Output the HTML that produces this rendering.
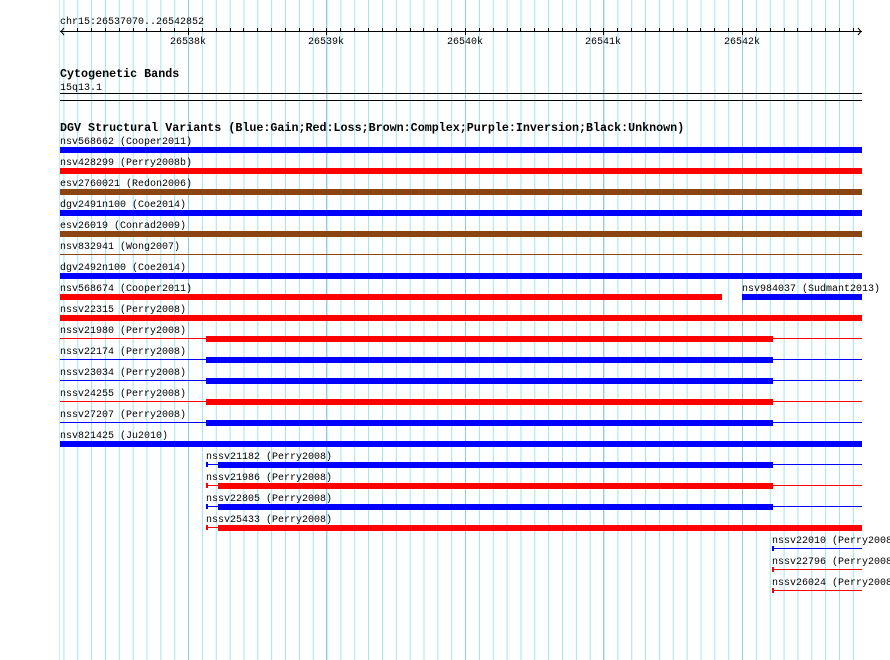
<!DOCTYPE html>
<html><head><meta charset="utf-8"><style>
html,body{margin:0;padding:0;background:#fff;width:890px;height:660px;overflow:hidden}
svg{display:block}
text{font-family:"Liberation Mono","DejaVu Sans Mono",monospace;font-size:10px;fill:#000}
.b{font-weight:bold;font-size:11.7px}
</style></head><body>
<svg width="890" height="660" xmlns="http://www.w3.org/2000/svg">
<defs><pattern id="g" x="63.4" y="0" width="13.85" height="660" patternUnits="userSpaceOnUse"><rect x="0" y="0" width="1" height="660" fill="#a0e4f0"/></pattern></defs>
<rect x="63" y="0" width="800" height="660" fill="url(#g)"/>
<rect x="59" y="0" width="1" height="660" fill="#c8eef4"/>
<g fill="#90cce8"><rect x="188" y="0" width="1" height="660"/><rect x="326" y="0" width="1" height="660"/><rect x="465" y="0" width="1" height="660"/><rect x="603" y="0" width="1" height="660"/><rect x="742" y="0" width="1" height="660"/></g>
<text x="60" y="24">chr15:26537070..26542852</text>
<rect x="60" y="31" width="802" height="1" fill="#000"/>
<path d="M64 28 L61 31.5 L64 35 M858 28 L861 31.5 L858 35" stroke="#000" fill="none"/>
<g stroke="#000"><path d="M77.5 28v4M91.5 28v4M105.5 28v4M119.5 28v4M133.5 28v4M146.5 28v4M160.5 28v4M174.5 28v4M188.5 28v7M202.5 28v4M216.5 28v4M230.5 28v4M243.5 28v4M257.5 28v4M271.5 28v4M285.5 28v4M299.5 28v4M313.5 28v4M326.5 28v7M340.5 28v4M354.5 28v4M368.5 28v4M382.5 28v4M396.5 28v4M410.5 28v4M423.5 28v4M437.5 28v4M451.5 28v4M465.5 28v7M479.5 28v4M493.5 28v4M507.5 28v4M520.5 28v4M534.5 28v4M548.5 28v4M562.5 28v4M576.5 28v4M590.5 28v4M603.5 28v7M617.5 28v4M631.5 28v4M645.5 28v4M659.5 28v4M673.5 28v4M687.5 28v4M700.5 28v4M714.5 28v4M728.5 28v4M742.5 28v7M756.5 28v4M770.5 28v4M784.5 28v4M797.5 28v4M811.5 28v4M825.5 28v4M839.5 28v4M853.5 28v4"/></g>
<text x="170" y="44">26538k</text><text x="308" y="44">26539k</text><text x="447" y="44">26540k</text><text x="585" y="44">26541k</text><text x="724" y="44">26542k</text>
<text x="60" y="77" class="b">Cytogenetic Bands</text>
<text x="60" y="90">15q13.1</text>
<rect x="60" y="93" width="802" height="1" fill="#000"/>
<rect x="60" y="100" width="802" height="1" fill="#000"/>
<text x="60" y="131" class="b">DGV Structural Variants (Blue:Gain;Red:Loss;Brown:Complex;Purple:Inversion;Black:Unknown)</text>

<text x="60" y="144">nsv568662 (Cooper2011)</text><rect x="60" y="147" width="802" height="6" fill="#0000ff"/>
<text x="60" y="165">nsv428299 (Perry2008b)</text><rect x="60" y="168" width="802" height="6" fill="#ff0000"/>
<text x="60" y="186">esv2760021 (Redon2006)</text><rect x="60" y="189" width="802" height="6" fill="#8b4513"/>
<text x="60" y="207">dgv2491n100 (Coe2014)</text><rect x="60" y="210" width="802" height="6" fill="#0000ff"/>
<text x="60" y="228">esv26019 (Conrad2009)</text><rect x="60" y="231" width="802" height="6" fill="#8b4513"/>
<text x="60" y="249">nsv832941 (Wong2007)</text><rect x="60" y="254" width="802" height="1" fill="#8b4513"/>
<text x="60" y="270">dgv2492n100 (Coe2014)</text><rect x="60" y="273" width="802" height="6" fill="#0000ff"/>
<text x="60" y="291">nsv568674 (Cooper2011)</text><rect x="60" y="294" width="662" height="6" fill="#ff0000"/>
<text x="742" y="291">nsv984037 (Sudmant2013)</text><rect x="742" y="294" width="120" height="6" fill="#0000ff"/>
<text x="60" y="312">nssv22315 (Perry2008)</text><rect x="60" y="315" width="802" height="6" fill="#ff0000"/>
<text x="60" y="333">nssv21980 (Perry2008)</text><rect x="60" y="338" width="802" height="1" fill="#ff0000"/><rect x="206" y="336" width="567" height="6" fill="#ff0000"/>
<text x="60" y="354">nssv22174 (Perry2008)</text><rect x="60" y="359" width="802" height="1" fill="#0000ff"/><rect x="206" y="357" width="567" height="6" fill="#0000ff"/>
<text x="60" y="375">nssv23034 (Perry2008)</text><rect x="60" y="380" width="802" height="1" fill="#0000ff"/><rect x="206" y="378" width="567" height="6" fill="#0000ff"/>
<text x="60" y="396">nssv24255 (Perry2008)</text><rect x="60" y="401" width="802" height="1" fill="#ff0000"/><rect x="206" y="399" width="567" height="6" fill="#ff0000"/>
<text x="60" y="417">nssv27207 (Perry2008)</text><rect x="60" y="422" width="802" height="1" fill="#0000ff"/><rect x="206" y="420" width="567" height="6" fill="#0000ff"/>
<text x="60" y="438">nsv821425 (Ju2010)</text><rect x="60" y="441" width="802" height="6" fill="#0000ff"/>

<text x="206" y="459">nssv21182 (Perry2008)</text><rect x="206" y="464" width="656" height="1" fill="#0000ff"/><rect x="206" y="462" width="2" height="5" fill="#0000ff"/><rect x="218" y="462" width="555" height="6" fill="#0000ff"/>
<text x="206" y="480">nssv21986 (Perry2008)</text><rect x="206" y="485" width="656" height="1" fill="#ff0000"/><rect x="206" y="483" width="2" height="5" fill="#ff0000"/><rect x="218" y="483" width="555" height="6" fill="#ff0000"/>
<text x="206" y="501">nssv22805 (Perry2008)</text><rect x="206" y="506" width="656" height="1" fill="#0000ff"/><rect x="206" y="504" width="2" height="5" fill="#0000ff"/><rect x="218" y="504" width="555" height="6" fill="#0000ff"/>
<text x="206" y="522">nssv25433 (Perry2008)</text><rect x="206" y="527" width="12" height="1" fill="#ff0000"/><rect x="206" y="525" width="2" height="5" fill="#ff0000"/><rect x="218" y="525" width="644" height="6" fill="#ff0000"/>

<text x="772" y="543">nssv22010 (Perry2008)</text><rect x="772" y="548" width="90" height="1" fill="#0000ff"/><rect x="772" y="546" width="2" height="5" fill="#0000ff"/>
<text x="772" y="564">nssv22796 (Perry2008)</text><rect x="772" y="569" width="90" height="1" fill="#ff0000"/><rect x="772" y="567" width="2" height="5" fill="#ff0000"/>
<text x="772" y="585">nssv26024 (Perry2008)</text><rect x="772" y="590" width="90" height="1" fill="#ff0000"/><rect x="772" y="588" width="2" height="5" fill="#ff0000"/>
</svg>
</body></html>
